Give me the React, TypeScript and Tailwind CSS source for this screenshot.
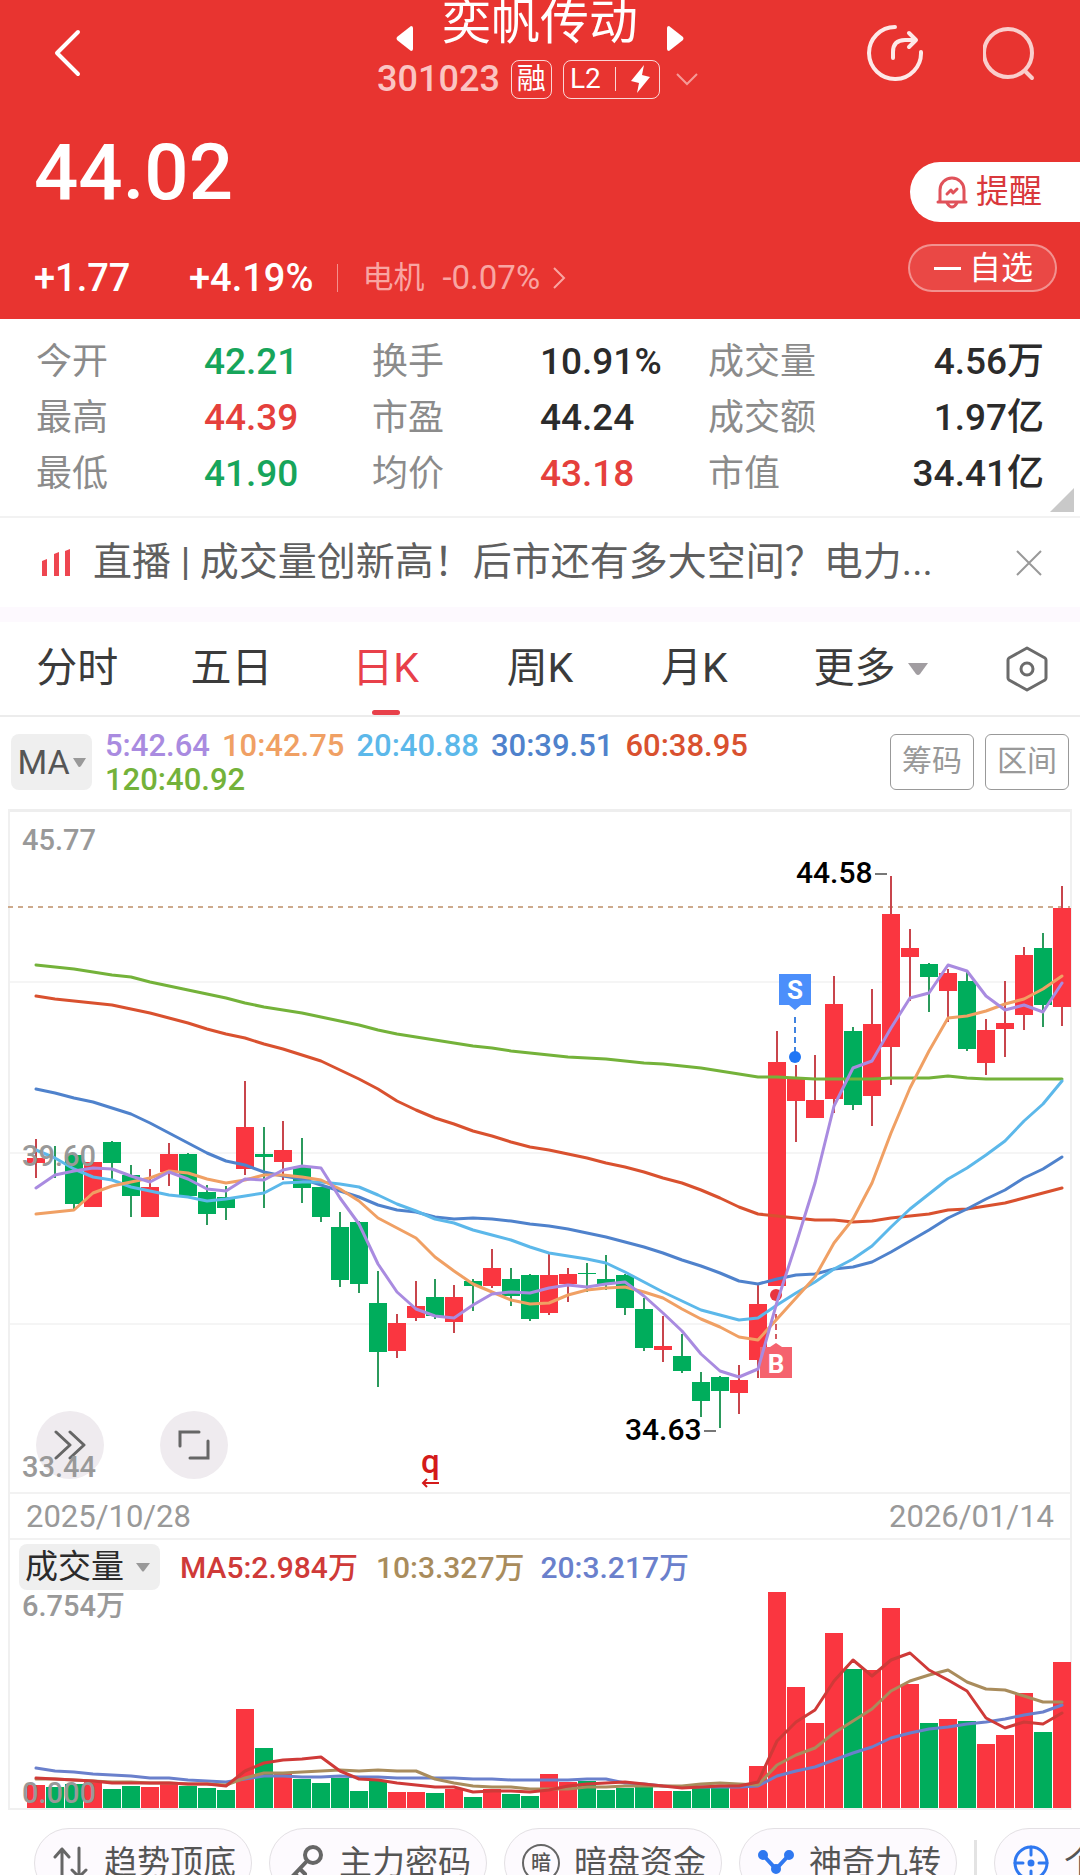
import React, { useState } from 'react';

const RED = '#fa3640';
const GREEN = '#00ad5c';
const STEP = 19;
const FIRST = 36;

// [up, bodyTop, bodyBottom, high, low]
const candles: [number, number, number, number, number][] = [
  [1, 358, 363, 339, 378], [0, 352, 354, 346, 378], [0, 355, 404, 355, 409], [1, 362, 407, 362, 407],
  [0, 342, 363, 341, 379], [0, 375, 396, 365, 417], [1, 387, 417, 369, 417], [1, 354, 372, 343, 386],
  [0, 354, 396, 353, 396], [0, 392, 414, 385, 425], [0, 397, 408, 386, 420], [1, 327, 369, 281, 375],
  [0, 354, 357, 327, 408], [1, 350, 362, 321, 380], [0, 367, 388, 338, 403], [0, 387, 417, 387, 422],
  [0, 427, 480, 412, 487], [0, 422, 484, 421, 493], [0, 503, 552, 471, 587], [1, 523, 551, 514, 558],
  [1, 506, 518, 481, 521], [0, 497, 516, 479, 519], [1, 497, 522, 485, 533], [0, 481, 486, 479, 511],
  [1, 468, 486, 449, 488], [0, 479, 496, 468, 506], [0, 475, 519, 474, 521], [1, 475, 513, 454, 515],
  [1, 474, 484, 468, 502], [0, 473, 474, 463, 492], [0, 479, 484, 455, 490], [0, 475, 508, 474, 515],
  [0, 509, 548, 498, 551], [1, 546, 550, 516, 562], [0, 556, 571, 534, 573], [0, 582, 601, 572, 617],
  [0, 577, 591, 576, 628], [1, 580, 593, 565, 614], [1, 504, 560, 485, 578], [1, 262, 486, 231, 486],
  [1, 279, 301, 265, 342], [1, 300, 318, 255, 318], [1, 204, 299, 176, 313], [0, 231, 305, 227, 310],
  [1, 224, 296, 189, 326], [1, 114, 247, 76, 285], [1, 148, 157, 129, 201], [0, 164, 177, 163, 212],
  [1, 173, 191, 169, 222], [0, 181, 249, 172, 251], [1, 230, 263, 219, 275], [1, 223, 229, 181, 257],
  [1, 155, 215, 147, 230], [0, 148, 205, 133, 227], [1, 108, 207, 86, 226],
];

const maLines = [
  {
    color: '#74b23a',
    ys: [165, 167, 169, 172, 175, 177, 182, 186, 190, 194, 198, 203, 207, 210, 213, 217, 221, 225, 230, 234, 237, 240, 243, 246, 248, 251, 253, 255, 257, 258, 259, 261, 263, 264, 266, 268, 271, 274, 277, 277, 278, 279, 279, 279, 279, 278, 278, 278, 276, 278, 279, 279, 279, 279, 279],
  },
  {
    color: '#d9512f',
    ys: [196, 199, 201, 203, 205, 209, 213, 218, 223, 229, 234, 238, 244, 249, 255, 261, 270, 279, 289, 301, 310, 318, 324, 331, 336, 342, 347, 350, 354, 358, 363, 367, 372, 378, 383, 390, 398, 407, 414, 416, 418, 420, 420, 422, 421, 418, 416, 414, 410, 409, 406, 403, 398, 393, 388],
  },
  {
    color: '#4f82cc',
    ys: [289, 293, 298, 302, 308, 314, 323, 333, 343, 353, 361, 365, 372, 376, 379, 385, 391, 397, 405, 410, 412, 417, 419, 418, 419, 421, 424, 426, 429, 433, 437, 442, 447, 453, 460, 466, 473, 481, 484, 479, 475, 474, 469, 467, 462, 452, 441, 430, 418, 409, 399, 390, 378, 369, 357],
  },
  {
    color: '#5cb8ea',
    ys: [350, 358, 369, 377, 380, 387, 391, 395, 397, 401, 399, 396, 393, 383, 382, 382, 384, 387, 395, 404, 411, 419, 423, 430, 435, 440, 447, 453, 456, 459, 463, 472, 482, 492, 501, 510, 515, 520, 518, 505, 493, 482, 469, 459, 446, 427, 409, 394, 379, 368, 355, 341, 321, 304, 281],
  },
  {
    color: '#f0a064',
    ys: [414, 412, 410, 393, 386, 382, 378, 371, 373, 379, 383, 380, 375, 375, 377, 380, 389, 401, 418, 428, 438, 457, 471, 484, 492, 500, 504, 503, 495, 490, 488, 487, 492, 498, 509, 519, 527, 537, 540, 519, 498, 477, 443, 419, 383, 333, 288, 251, 218, 216, 211, 204, 199, 189, 176],
  },
  {
    color: '#a98be0',
    ys: [388, 375, 371, 368, 369, 376, 382, 372, 379, 389, 391, 379, 380, 370, 366, 368, 398, 424, 464, 492, 509, 516, 518, 505, 494, 492, 493, 488, 485, 487, 484, 482, 496, 513, 531, 554, 571, 577, 569, 502, 444, 383, 306, 268, 261, 228, 198, 193, 165, 171, 196, 210, 205, 212, 183],
  },
];

const volumes = [
  305, 307, 304, 300, 309, 306, 307, 302, 306, 308, 310, 229, 268, 294, 299, 303, 298, 311, 301, 312, 312, 313, 309, 317, 309, 314, 316, 294, 302, 301, 310, 308, 307, 311, 311, 307, 308, 307, 286, 112, 207, 243, 153, 189, 190, 128, 204, 243, 239, 241, 264, 255, 213, 252, 182,
];

const volumeLines = [
  {
    color: '#6a80cc',
    ys: [288, 291, 292, 294, 295, 296, 298, 298, 300, 301, 302, 299, 296, 296, 297, 297, 296, 297, 297, 298, 298, 298, 298, 299, 299, 300, 300, 300, 300, 299, 299, 303, 304, 306, 307, 307, 307, 307, 306, 296, 291, 287, 280, 273, 267, 258, 253, 249, 247, 244, 242, 239, 235, 232, 225],
  },
  {
    color: '#a98c5c',
    ys: [299, 299, 300, 301, 302, 302, 303, 303, 304, 304, 305, 298, 293, 293, 292, 291, 290, 291, 290, 291, 291, 299, 303, 306, 307, 307, 309, 309, 309, 307, 307, 306, 306, 306, 306, 304, 303, 304, 305, 285, 275, 268, 253, 241, 229, 211, 201, 195, 190, 202, 209, 210, 216, 222, 222],
  },
  {
    color: '#cf3a38',
    ys: [298, 299, 300, 301, 303, 303, 303, 303, 304, 304, 306, 291, 283, 280, 279, 277, 291, 299, 300, 303, 305, 307, 307, 312, 311, 311, 312, 310, 306, 304, 303, 302, 304, 306, 308, 307, 306, 306, 302, 261, 242, 230, 201, 180, 196, 180, 173, 190, 200, 211, 238, 248, 242, 244, 233],
  },
];

const toPoints = (ys: number[]) => ys.map((y, i) => `${FIRST + i * STEP},${y}`).join(' ');

const quotes = [
  { label: '今开', value: '42.21', tone: 'text-[#17a55b]' },
  { label: '换手', value: '10.91%', tone: 'text-[#2b2b2b]' },
  { label: '成交量', value: '4.56万', tone: 'text-[#2b2b2b]' },
  { label: '最高', value: '44.39', tone: 'text-[#e5403c]' },
  { label: '市盈', value: '44.24', tone: 'text-[#2b2b2b]' },
  { label: '成交额', value: '1.97亿', tone: 'text-[#2b2b2b]' },
  { label: '最低', value: '41.90', tone: 'text-[#17a55b]' },
  { label: '均价', value: '43.18', tone: 'text-[#e5403c]' },
  { label: '市值', value: '34.41亿', tone: 'text-[#2b2b2b]' },
];

const tabs = ['分时', '五日', '日K', '周K', '月K'];

const maLegend = [
  { text: '5:42.64', tone: 'text-[#a98be0]' },
  { text: '10:42.75', tone: 'text-[#f0a064]' },
  { text: '20:40.88', tone: 'text-[#5cb8ea]' },
  { text: '30:39.51', tone: 'text-[#4f82cc]' },
  { text: '60:38.95', tone: 'text-[#d9512f]' },
  { text: '120:40.92', tone: 'text-[#74b23a]' },
];

function Header() {
  return (
    <header className="bg-[#e83430] text-white">
      <div className="grid grid-cols-[1fr_auto_1fr] h-[106px]">
        <button aria-label="返回" className="justify-self-start self-center pl-[52px]">
          <svg width="32" height="48" viewBox="0 0 32 48" fill="none" stroke="currentColor" strokeWidth="4" strokeLinecap="round" strokeLinejoin="round">
            <path d="M26 3 L5 24 L26 45" />
          </svg>
        </button>
        <div className="flex flex-col items-center">
          <div className="flex items-start gap-7 h-[60px]">
            <button aria-label="上一只" className="mt-[26px]">
              <svg width="18" height="25" viewBox="0 0 18 25" fill="currentColor"><path d="M15 0 Q17 0 17 2 V23 Q17 25 15 25 L1 14 Q0 12 1 11 Z" /></svg>
            </button>
            <h1 className="text-[49px] leading-[46px] whitespace-nowrap">奕帆传动</h1>
            <button aria-label="下一只" className="mt-[26px]">
              <svg width="18" height="25" viewBox="0 0 18 25" fill="currentColor"><path d="M3 0 Q1 0 1 2 V23 Q1 25 3 25 L17 14 Q18 12 17 11 Z" /></svg>
            </button>
          </div>
          <div className="flex items-center gap-[11px] h-[38px] pr-1">
            <span className="text-[36px] leading-[38px] font-medium text-[#fbc4c2]">301023</span>
            <span className="flex items-center justify-center w-[41px] h-[39px] border border-white/80 rounded-lg text-[29px] leading-[30px]">融</span>
            <span className="flex items-center justify-between w-[97px] h-[39px] pl-[6px] pr-[7px] border border-white/80 rounded-lg text-[28px] leading-[30px]">
              L2
              <span className="w-px h-6 bg-white/80" />
              <svg width="22" height="28" viewBox="0 0 22 28" fill="currentColor"><path d="M14 0 L1 16 L9 18 L7 28 L20 12 L12 10 Z" /></svg>
            </span>
            <svg className="ml-1" width="24" height="14" viewBox="0 0 24 14" fill="none" stroke="#f59a97" strokeWidth="2"><path d="M2 2 L12 12 L22 2" /></svg>
          </div>
        </div>
        <div className="flex items-center justify-end gap-[58px] pr-[43px]">
          <button aria-label="分享">
            <svg width="58" height="58" viewBox="0 0 58 58" fill="none" stroke="#fde9e8" strokeWidth="4" strokeLinecap="round" strokeLinejoin="round">
              <path d="M28 3 A26 26 0 1 0 54 28" />
              <path d="M26 34 V28 Q26 16 38 16 H48 M42 9 L49 16 L42 23" />
            </svg>
          </button>
          <button aria-label="搜索">
            <svg width="54" height="56" viewBox="0 0 54 56" fill="none" stroke="#f9cecc" strokeWidth="4" strokeLinecap="round">
              <circle cx="25" cy="28" r="24" />
              <path d="M42 46 L49 53" />
            </svg>
          </button>
        </div>
      </div>
      <div className="flex justify-between">
        <div className="pl-[34px] pt-[26px] pb-[21px]">
          <div className="text-[78px] leading-[82px] font-medium">44.02</div>
          <div className="flex items-center mt-11 h-10 leading-10 text-[38px] font-medium">
            <span className="w-[155px]">+1.77</span>
            <span>+4.19%</span>
            <span className="w-px h-7 mx-6 bg-[#f58f8c]" />
            <a href="#sector" className="flex items-center text-[#f9a5a2]">
              <span className="text-[31px] font-normal mr-[18px]">电机</span>
              <span className="text-[33px] font-normal">-0.07%</span>
              <svg className="ml-3" width="14" height="24" viewBox="0 0 14 24" fill="none" stroke="currentColor" strokeWidth="2"><path d="M2 2 L12 12 L2 22" /></svg>
            </a>
          </div>
        </div>
        <div className="flex flex-col items-end pt-14">
          <button className="flex items-center gap-2 h-[60px] pl-[26px] pr-[38px] rounded-l-full bg-white text-[#d9383c] text-[33px] leading-[60px]">
            <svg width="32" height="34" viewBox="0 0 32 34" fill="none" stroke="#e0525a" strokeWidth="3" strokeLinejoin="round" strokeLinecap="round">
              <path d="M4 27 V15 A12 12 0 0 1 28 15 V27 M2 27 H30 M11 28 Q16 36 21 28" />
              <path d="M11 19 L15 15 L17 18 L21 14" />
            </svg>
            提醒
          </button>
          <button className="flex items-center gap-2 h-12 mt-[22px] mr-[23px] pl-6 pr-[22px] rounded-full border-2 border-white/40 bg-white/10 text-[32px] leading-[44px]">
            <span className="w-[27px] h-[3px] bg-white" />
            自选
          </button>
        </div>
      </div>
    </header>
  );
}

function Quotes() {
  return (
    <section className="relative border-b-2 border-[#f2f2f2]">
      <dl className="grid grid-cols-3 px-9 pt-[15px] pb-[14px]">
        {quotes.map((q, i) => (
          <div key={q.label} className={i % 3 === 2 ? 'flex justify-between h-14 items-center' : 'flex h-14 items-center'}>
            <dt className={i % 3 === 2 ? 'text-[36px] leading-[56px] text-[#8b8b8b]' : 'w-1/2 text-[36px] leading-[56px] text-[#8b8b8b]'}>{q.label}</dt>
            <dd className={`text-[37px] leading-[56px] font-medium ${q.tone}`}>{q.value}</dd>
          </div>
        ))}
      </dl>
      <svg className="absolute right-[6px] bottom-1" width="24" height="24" viewBox="0 0 24 24" fill="#c9c9c9"><path d="M24 0 V24 H0 Z" /></svg>
    </section>
  );
}

function LiveBanner() {
  return (
    <section className="flex items-center h-[89px] pl-[42px] pr-[38px] text-[#5f5f5f]">
      <svg className="mr-[22px]" width="29" height="27" viewBox="0 0 29 27" fill="#ee4650">
        <path d="M0 12 L5 10 V27 H0 Z M12 5 L17 3 V27 H12 Z M23 2 L28 0 V27 H23 Z" />
      </svg>
      <a href="#live" className="flex-1 text-[39px] leading-[89px] whitespace-nowrap">直播 | 成交量创新高！后市还有多大空间？电力...</a>
      <button aria-label="关闭">
        <svg width="26" height="26" viewBox="0 0 26 26" fill="none" stroke="#999" strokeWidth="2"><path d="M1 1 L25 25 M25 1 L1 25" /></svg>
      </button>
    </section>
  );
}

function Tabs() {
  const [active, setActive] = useState('日K');
  return (
    <nav className="grid grid-cols-7 h-[95px] border-b-2 border-[#ececec] text-[41px] text-[#3b3b3b]">
      {tabs.map((t) => (
        <button key={t} onClick={() => setActive(t)} className={t === active ? 'relative text-[#e8404a]' : 'relative'}>
          {t}
          {t === active && <span className="absolute bottom-0 left-1/2 -ml-[14px] w-7 h-[5px] rounded-full bg-[#e8404a]" />}
        </button>
      ))}
      <button className="flex items-center gap-3 pl-[42px] whitespace-nowrap">
        更多
        <svg className="shrink-0" width="22" height="14" viewBox="0 0 22 14" fill="#a19da1"><path d="M1 1 H21 L13 12 Q11 14 9 12 Z" /></svg>
      </button>
      <button aria-label="设置" className="flex items-center justify-end pr-8">
        <svg width="42" height="46" viewBox="0 0 42 46" fill="none" stroke="#6b6b6b" strokeWidth="3" strokeLinejoin="round">
          <path d="M21 2 L39 12 Q40 13 40 14 V32 Q40 33 39 34 L21 44 L3 34 Q2 33 2 32 V14 Q2 13 3 12 Z" />
          <circle cx="21" cy="23" r="6" />
        </svg>
      </button>
    </nav>
  );
}

function MaBar() {
  return (
    <div className="flex items-start h-[92px] pt-[17px] px-[11px]">
      <button className="flex items-center justify-center gap-[3px] w-[81px] h-14 rounded-lg bg-[#efefef] text-[34px] text-[#555] shrink-0">
        MA
        <svg width="13" height="9" viewBox="0 0 13 9" fill="#999"><path d="M0 0 H13 L8 8 Q6 10 5 8 Z" /></svg>
      </button>
      <div className="flex flex-wrap gap-x-3 flex-1 pl-[13px] pr-24 -mt-[5px] text-[31px] leading-[34px] font-medium">
        {maLegend.map((m) => (
          <span key={m.text} className={m.tone}>{m.text}</span>
        ))}
      </div>
      <div className="flex gap-[11px] text-[30px] text-[#999] shrink-0">
        <button className="w-[84px] h-14 pb-1 border border-[#999] rounded-md">筹码</button>
        <button className="w-[84px] h-14 pb-1 border border-[#999] rounded-md">区间</button>
      </div>
    </div>
  );
}

function KLineChart() {
  return (
    <div className="relative border-t-[3px] border-[#eee]">
      <svg className="block w-full h-auto overflow-visible" viewBox="10 12 1060 680" role="img" aria-label="日K">
        {[182, 353, 524].map((y) => (
          <line key={y} x1="10" x2="1070" y1={y} y2={y} stroke="#f5f5f5" strokeWidth="2" />
        ))}
        <line x1="8" x2="1070" y1="107" y2="107" stroke="#cdaa8c" strokeWidth="2" strokeDasharray="5 5" />

        {candles.map(([up, top, bottom, high, low], i) => {
          const x = FIRST + i * STEP;
          return (
            <g key={i} fill={up ? RED : GREEN}>
              <rect x={x - 1} y={high} width="2" height={low - high} fill={up ? '#c8454c' : '#2b9a5c'} />
              {i !== 1 && <rect x={x - 9} y={top} width="18" height={bottom - top} />}
            </g>
          );
        })}

        {/* trade markers */}
        <g>
          <line x1="795" x2="795" y1="217" y2="252" stroke="#3f83e0" strokeWidth="2" strokeDasharray="6 4" />
          <circle cx="795" cy="257" r="6" fill="#1f76f5" />
          <path d="M779 174 H811 V205 H801 L795 210 L789 205 H779 Z" fill="#4c8ffb" />
          <text x="795" y="199" textAnchor="middle" fontSize="26" fontWeight="700" fill="#fff">S</text>
          <circle cx="776" cy="495" r="6" fill="#e8353f" />
          <line x1="776" x2="776" y1="514" y2="539" stroke="#d35b62" strokeWidth="2" strokeDasharray="6 4" />
          <path d="M760 547 H770 L776 543 L782 547 H792 V578 H760 Z" fill="#f5636e" />
          <text x="776" y="573" textAnchor="middle" fontSize="26" fontWeight="700" fill="#fff">B</text>
        </g>

        {maLines.map((l) => (
          <polyline key={l.color} points={toPoints(l.ys)} fill="none" stroke={l.color} strokeWidth="3" strokeLinejoin="round" strokeLinecap="round" />
        ))}

        <g fontSize="30" fontWeight="500" fill="#000">
          <text x="796" y="83">44.58</text>
          <text x="625" y="640">34.63</text>
        </g>
        <g stroke="#777" strokeWidth="2">
          <line x1="875" x2="887" y1="74" y2="74" />
          <line x1="704" x2="716" y1="631" y2="631" />
        </g>

        <text x="421" y="673" fontSize="33" fontWeight="500" fill="#d41a1a">q</text>
        <path d="M439 683 H423 M427 679 L423 683 L427 687" stroke="#d41a1a" strokeWidth="2" fill="none" />
      </svg>

      <button aria-label="展开" className="absolute left-[26px] bottom-[13px] w-[68px] h-[68px] rounded-full bg-[#efebef] flex items-center justify-center">
        <svg width="32" height="30" viewBox="0 0 32 30" fill="none" stroke="#666" strokeWidth="3" strokeLinecap="round" strokeLinejoin="round">
          <path d="M2 2 L16 15 L2 28 M16 2 L30 15 L16 28" />
        </svg>
      </button>
      <button aria-label="全屏" className="absolute left-[150px] bottom-[13px] w-[68px] h-[68px] rounded-full bg-[#efebef] flex items-center justify-center">
        <svg width="32" height="30" viewBox="0 0 32 30" fill="none" stroke="#666" strokeWidth="3" strokeLinecap="round">
          <path d="M2 16 V2 H21 M30 11 V28 H12" />
        </svg>
      </button>
      <div className="absolute inset-y-0 left-3 flex flex-col justify-between pt-[10px] pb-[7px] text-[29px] leading-9 font-medium text-[#999] pointer-events-none">
        <span>45.77</span>
        <span className="pt-1">39.60</span>
        <span>33.44</span>
      </div>
    </div>
  );
}

function VolumeChart() {
  return (
    <div>
      <div className="flex items-center h-[52px] pt-[2px] pl-[9px] text-[30px]">
        <button className="flex items-center gap-3 h-[46px] pl-[6px] pr-[10px] rounded-lg bg-[#efefef] text-[33px] leading-[46px] text-[#2b2b2b]">
          成交量
          <svg width="14" height="9" viewBox="0 0 14 9" fill="#999"><path d="M0 0 H14 L8 8 Q7 9 6 8 Z" /></svg>
        </button>
        <span className="ml-5 font-medium text-[#cf3a38]">MA5:2.984万</span>
        <span className="ml-[18px] font-medium text-[#a98c5c]">10:3.327万</span>
        <span className="ml-4 font-medium text-[#6a80cc]">20:3.217万</span>
      </div>
      <svg className="block w-full h-auto overflow-visible" viewBox="10 112 1060 216" role="img" aria-label="成交量">
        {volumes.map((y, i) => (
          <rect key={i} x={FIRST + i * STEP - 9} y={y} width="18" height={328 - y} fill={candles[i][0] ? RED : GREEN} />
        ))}
        {volumeLines.map((l) => (
          <polyline key={l.color} points={toPoints(l.ys)} fill="none" stroke={l.color} strokeWidth="3" strokeLinejoin="round" strokeLinecap="round" />
        ))}
        <g fontSize="29" fontWeight="500" fill="#999">
          <text x="22" y="136">6.754万</text>
          <text x="22" y="323">0.000</text>
        </g>
      </svg>
    </div>
  );
}

function Pill({ children, label }: { children: React.ReactNode; label: string }) {
  return (
    <button className="flex items-center gap-[14px] w-[218px] h-[70px] pl-[17px] shrink-0 rounded-full border border-[#e3e0e4] bg-[#fdfafe] text-[33px] text-[#555] whitespace-nowrap">
      {children}
      {label}
    </button>
  );
}

function Toolbar() {
  return (
    <div className="flex gap-[17px] pl-[34px] pt-[18px] overflow-hidden">
      <Pill label="趋势顶底">
        <svg width="38" height="36" viewBox="0 0 38 36" fill="none" stroke="#666" strokeWidth="3" strokeLinecap="round" strokeLinejoin="round">
          <path d="M10 33 V4 M3 12 L10 4 L17 12 M27 3 V32 M20 25 L27 32 L34 25" />
        </svg>
      </Pill>
      <Pill label="主力密码">
        <svg width="38" height="36" viewBox="0 0 38 36" fill="none" stroke="#666" strokeWidth="4" strokeLinecap="round" strokeLinejoin="round">
          <circle cx="26" cy="10" r="8" />
          <path d="M20 16 L4 33 M13 24 L18 29 M8 29 L12 33" />
        </svg>
      </Pill>
      <Pill label="暗盘资金">
        <span className="flex items-center justify-center w-[38px] h-[38px] rounded-full border-2 border-[#666] text-[20px] font-medium">暗</span>
      </Pill>
      <Pill label="神奇九转">
        <svg width="38" height="36" viewBox="0 0 38 36" fill="#2f78f0" stroke="#2f78f0" strokeWidth="4">
          <path d="M6 10 L19 24 L32 10" fill="none" />
          <circle cx="6" cy="10" r="3" />
          <circle cx="19" cy="24" r="3" />
          <circle cx="32" cy="10" r="3" />
        </svg>
      </Pill>
      <span className="w-[3px] h-12 mt-3 shrink-0 bg-[#e3e3e3]" />
      <Pill label="个股对比">
        <svg width="38" height="38" viewBox="0 0 38 38" fill="none" stroke="#2f78f0" strokeWidth="3" strokeLinecap="round">
          <circle cx="19" cy="19" r="16" />
          <path d="M19 3 V11 M19 27 V35 M3 19 H11 M27 19 H35" />
          <circle cx="19" cy="19" r="2" fill="#2f78f0" />
        </svg>
      </Pill>
    </div>
  );
}

export default function App() {
  return (
    <main className="h-screen overflow-hidden bg-white font-['Roboto','Noto_Sans_CJK_SC',sans-serif]">
      <Header />
      <Quotes />
      <LiveBanner />
      <div className="h-[15px] bg-[#fdf9fe]" />
      <Tabs />
      <MaBar />
      <section className="mx-2 border-x-2 border-b-2 border-[#f0f0f0]">
        <KLineChart />
        <div className="flex items-center justify-between h-12 px-4 pt-[2px] border-y-2 border-[#f2f2f2] text-[31px] text-[#999]">
          <time dateTime="2025-10-28">2025/10/28</time>
          <time dateTime="2026-01-14">2026/01/14</time>
        </div>
        <VolumeChart />
      </section>
      <Toolbar />
    </main>
  );
}
